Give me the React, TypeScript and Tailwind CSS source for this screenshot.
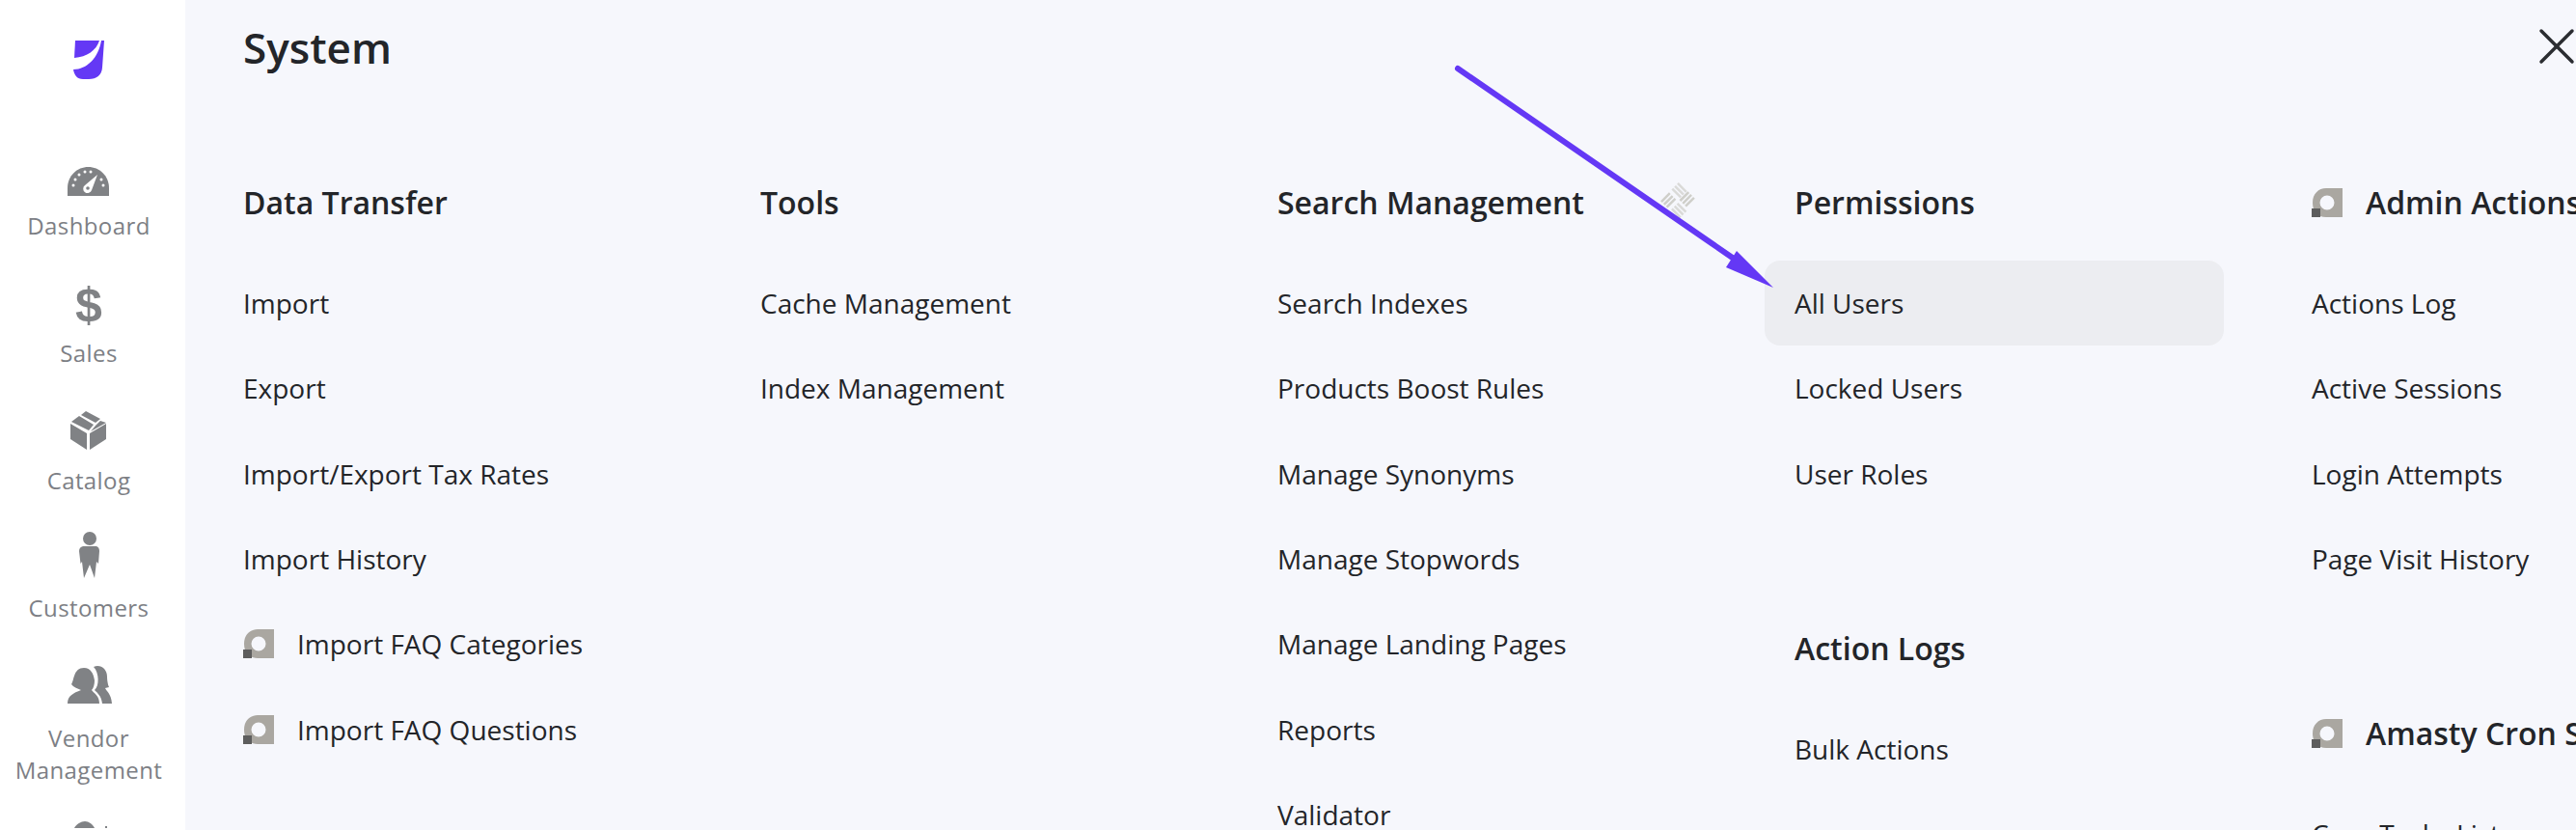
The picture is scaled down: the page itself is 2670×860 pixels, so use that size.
import { X } from "lucide-react"

type Item = { label: string; amasty?: boolean; active?: boolean }
type Group = { title: string; amasty?: boolean; items: Item[] }

const columns: Group[][] = [
  [
    {
      title: "Data Transfer",
      items: [
        { label: "Import" },
        { label: "Export" },
        { label: "Import/Export Tax Rates" },
        { label: "Import History" },
        { label: "Import FAQ Categories", amasty: true },
        { label: "Import FAQ Questions", amasty: true },
      ],
    },
  ],
  [{ title: "Tools", items: [{ label: "Cache Management" }, { label: "Index Management" }] }],
  [
    {
      title: "Search Management",
      items: [
        { label: "Search Indexes" },
        { label: "Products Boost Rules" },
        { label: "Manage Synonyms" },
        { label: "Manage Stopwords" },
        { label: "Manage Landing Pages" },
        { label: "Reports" },
        { label: "Validator" },
      ],
    },
  ],
  [
    {
      title: "Permissions",
      items: [{ label: "All Users", active: true }, { label: "Locked Users" }, { label: "User Roles" }],
    },
    { title: "Action Logs", items: [{ label: "Bulk Actions" }] },
  ],
  [
    {
      title: "Admin Actions",
      amasty: true,
      items: [
        { label: "Actions Log" },
        { label: "Active Sessions" },
        { label: "Login Attempts" },
        { label: "Page Visit History" },
      ],
    },
    { title: "Amasty Cron Scheduler", amasty: true, items: [{ label: "Cron Tasks List" }] },
  ],
]

function AmastyIcon() {
  return (
    <svg viewBox="0 0 32 30" className="w-8 h-[30px] shrink-0">
      <path
        fillRule="evenodd"
        fill="#aaa7a1"
        d="M32 0V30H15C6 30 1 24 1 15 1 6 7 0 15 0ZM16 7.500A7.500 7.500 0 1 0 16 22.500 7.500 7.500 0 0 0 16 7.500Z"
      />
      <rect x="0" y="21" width="9" height="9" fill="#5d5d5d" />
    </svg>
  )
}

function NavIcon({ y, children }: { y: number; children: React.ReactNode }) {
  // viewBox follows the page coordinates of the sidebar
  return (
    <svg viewBox={`52 ${y} 80 66`} className="w-20 h-[66px] shrink-0" fill="#808285">
      {children}
    </svg>
  )
}

function Sidebar() {
  return (
    <aside className="w-[192px] shrink-0 bg-white pr-2 flex flex-col items-center">
      <svg viewBox="76 42 32 40" className="w-8 h-10 mt-[42px] shrink-0" fill="#6438f5">
        <path d="M78 42H103C100 52 90 59 77 60Z" />
        <path d="M105 42H108L106 70C105.500 78 100 82 92 82H86C80 82 77 78 76 72 90 72 102 60 105 42Z" />
      </svg>

      <div className="mt-[69px] h-[132px] flex flex-col items-center">
        <NavIcon y={151}>
          <path d="M70 203V195C70 182 80 173 91.500 173 103 173 113 182 113 195V203Z" />
          <g fill="#fff">
            <circle cx="76" cy="192" r="1.500" />
            <circle cx="78" cy="186" r="1.500" />
            <circle cx="82" cy="181" r="1.500" />
            <circle cx="88" cy="178" r="1.500" />
            <circle cx="94" cy="178" r="1.500" />
            <circle cx="105" cy="186" r="1.500" />
            <circle cx="107" cy="192" r="1.500" />
            <path d="M101 181 95 197A4.500 4.500 0 1 1 88 192Z" />
          </g>
          <circle cx="91" cy="195" r="1.800" />
        </NavIcon>
        <span className="text-2xl leading-[33px] tracking-[0.4px] text-[#7d7f85]">Dashboard</span>
      </div>

      <div className="h-[132px] flex flex-col items-center">
        <div className="h-[66px] flex items-end">
          <span className="font-['Liberation_Sans',sans-serif] font-bold text-[50px] leading-[66px] h-[66px] text-[#808285]">$</span>
        </div>
        <span className="text-2xl leading-[33px] tracking-[0.4px] text-[#7d7f85]">Sales</span>
      </div>

      <div className="h-[132px] flex flex-col items-center">
        <NavIcon y={416}>
          <path d="M73 440 90 450V467L73 456Z" />
          <path d="M93 450 110 440V456L93 467Z" />
          <path d="M89 427 104 435 99 439 84 431Z" />
          <path d="M82 432 97 441 92 447 74 438Z" />
          <path d="M104 437 110 439 94 448 99 442Z" />
        </NavIcon>
        <span className="text-2xl leading-[33px] tracking-[0.4px] text-[#7d7f85]">Catalog</span>
      </div>

      <div className="h-[135px] flex flex-col items-center">
        <NavIcon y={548}>
          <circle cx="93" cy="559" r="7" />
          <path d="M86 567H100Q103 568 103 572L102 585 100 583 98 600 93 586 87 600 85 583 83.500 585 82 572Q82 568 86 567Z" />
        </NavIcon>
        <span className="text-2xl leading-[33px] tracking-[0.4px] text-[#7d7f85]">Customers</span>
      </div>

      <div className="flex flex-col items-center">
        <NavIcon y={683}>
          <path d="M97 692C104 689 111 694 111 702 111 706 112 711 113 713L109 714C110 717 115 719 116 730H106C105 722 101 719 98 716 103 712 103 698 97 692Z" />
          <path d="M87 693C94 693 97 699 98 706 98 710 97 714 95 716 98 720 103 722 103 730H70C70 722 76 719 84 716 80 714 76 713 74 710 77 706 76 693 87 693Z" />
        </NavIcon>
        <span className="text-2xl leading-[33px] tracking-[0.4px] text-[#7d7f85] text-center w-[180px]">Vendor Management</span>
        <svg viewBox="72 853 40 7" className="w-10 h-[7px] mt-[37px] shrink-0" fill="#808285">
          <path d="M77 860C79 856 84 853 88 853 92 853 96 856 98 860Z" />
          <rect x="109" y="858" width="2" height="2" />
        </svg>
      </div>
    </aside>
  )
}

function MenuGroup({ group, first }: { group: Group; first: boolean }) {
  return (
    <div className={first ? "" : "mt-[115px]"}>
      <h3 className="flex items-center gap-6 pl-[31px] h-11 mb-[38px] text-[32px] font-semibold text-[#232529] whitespace-nowrap">
        {group.amasty && <AmastyIcon />}
        {group.title}
      </h3>
      {group.items.map((item) => (
        <div
          key={item.label}
          className={`flex items-center gap-6 h-[88.3px] pl-[31px] rounded-2xl text-[28px] text-[#232529] whitespace-nowrap ${
            item.active ? "bg-[#ecedf1]" : ""
          }`}
        >
          {item.amasty && <AmastyIcon />}
          {item.label}
        </div>
      ))}
    </div>
  )
}

export default function App() {
  return (
    <div className="relative flex w-[2670px] h-[860px] overflow-hidden bg-[#f6f7fc] font-['Open_Sans',sans-serif]">
      <Sidebar />

      <main className="flex-1 min-w-0 pl-[29px]">
        <div className="flex items-center justify-between h-[98px] pl-[31px]">
          <h1 className="text-[44px] font-semibold text-[#232529]">System</h1>
          <X className="w-16 h-16 text-[#2b2d31] -mr-3 mb-[3px] shrink-0" strokeWidth={1.300} />
        </div>
        <div className="flex gap-[60px] mt-[90px]">
          {columns.map((groups) => (
            <div key={groups[0].title} className="w-[476px] shrink-0">
              {groups.map((group, i) => (
                <MenuGroup key={group.title} group={group} first={i === 0} />
              ))}
            </div>
          ))}
        </div>
      </main>

      {/* faint watermark under the annotation arrow */}
      <svg viewBox="0 0 38 38" className="absolute left-[1721px] top-[189px] w-[38px] h-[38px]" stroke="#cfcfca" strokeWidth="2.500">
        <g transform="rotate(45 19 19)">
          <path d="M5.500 7H18M5.500 11H18M5.500 15H18" opacity="0.7" />
          <path d="M20 5.500V18M24 5.500V18M28 5.500V18" />
          <path d="M7 20V32.500M11 20V32.500M15 20V32.500" />
          <path d="M20 22H32.500M20 26H32.500M20 30H32.500" opacity="0.7" />
        </g>
      </svg>

      {/* annotation arrow */}
      <svg viewBox="1500 60 350 250" className="absolute left-[1500px] top-[60px] w-[350px] h-[250px]">
        <line x1="1511" y1="71" x2="1800" y2="270" stroke="#6438f5" strokeWidth="6" strokeLinecap="round" />
        <path d="M1838 298 1789 277 1800 260Z" fill="#6438f5" />
      </svg>
    </div>
  )
}
